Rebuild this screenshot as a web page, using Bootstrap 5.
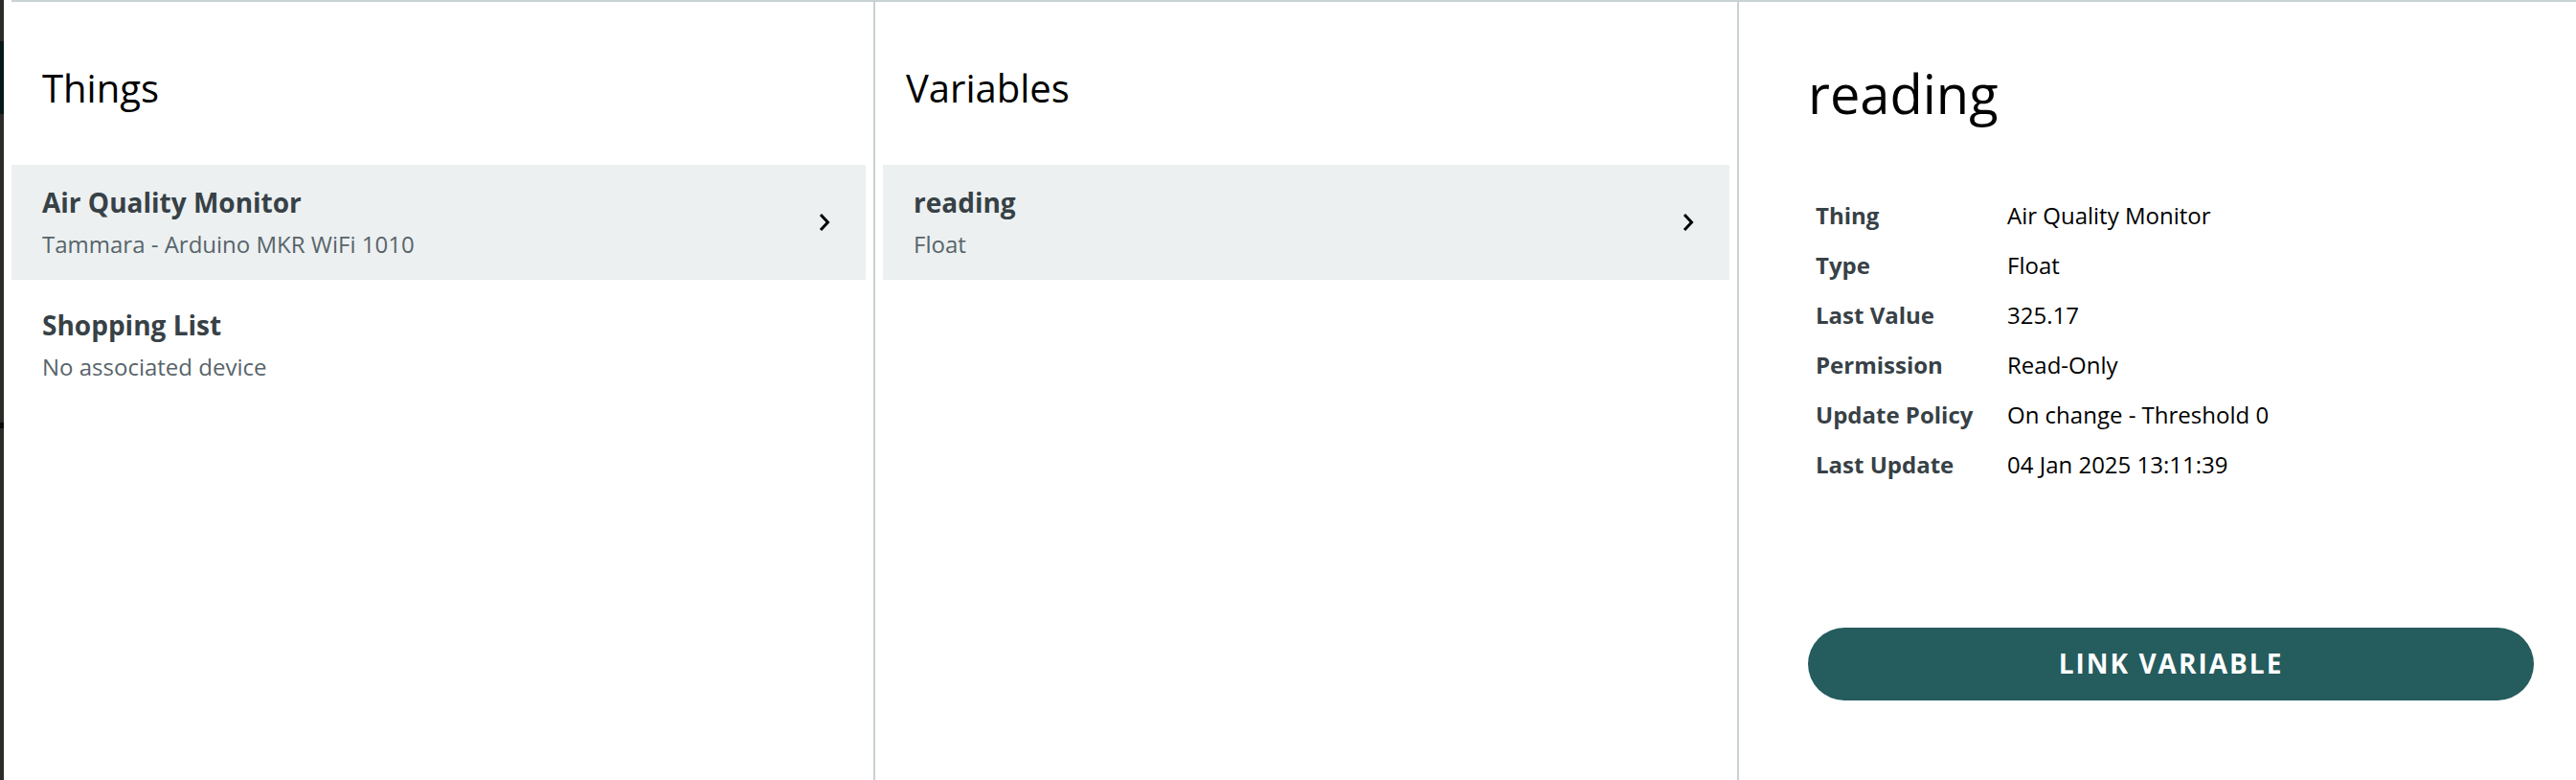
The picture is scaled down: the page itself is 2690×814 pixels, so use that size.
<!DOCTYPE html>
<html lang="en">
<head>
<meta charset="utf-8">
<meta name="viewport" content="width=device-width, initial-scale=1">
<title>Link variable</title>
<link href="https://cdn.jsdelivr.net/npm/bootstrap@5.3.0/dist/css/bootstrap.min.css" rel="stylesheet">
<style>
  body { font-family: "Open Sans", sans-serif; font-size: 24px; line-height: 44px; color: #000; background: #fff; }
  .backdrop-edge {
    width: 4px;
    background:
      linear-gradient(#061918, #061918) 0 43px / 4px 76px no-repeat,
      linear-gradient(#0c0b08, #0c0b08) 0 441px / 4px 6px no-repeat,
      #2d2b28;
  }
  .browser {
    grid-template-columns: minmax(0, 902fr) minmax(0, 902fr) minmax(0, 874fr);
    border-top: 2px solid #c9d2d2;
    margin-left: 8px;
  }
  .pane { border-right: 2px solid #c9d2d2; }
  .detail { padding: 57px 44px 0 72px; }
  .pane-title { font-size: 40px; line-height: 56px; font-weight: 400; padding: 62px 32px 52px; margin: 0; }
  .entries { gap: 8px; padding-right: 8px; }
  .pane + .pane .entries { padding-left: 8px; }
  .entry { border: 0; background: transparent; padding: 16px 32px; color: #374146; }
  .entry.active { background: #ecf0f1; }
  .entry-name { font-size: 28px; line-height: 46px; font-weight: 700; }
  .entry-note { line-height: 42px; color: #58646a; }
  .detail-title { font-size: 56px; line-height: 76px; font-weight: 400; margin: 0 0 64px; }
  .facts { line-height: 52px; margin-bottom: 144px; }
  .facts th, .facts td { padding: 0 0 0 8px; }
  .facts th { width: 200px; color: #374146; }
  .btn-link-variable { --bs-btn-color: #fff; --bs-btn-bg: #255c5e; --bs-btn-hover-color: #fff; --bs-btn-hover-bg: #1b4748;
    font-size: 28px; line-height: 42px; font-weight: 700; padding: 16px 16px 18px; border: 0; letter-spacing: 2px; }
</style>
</head>
<body>
<div class="d-flex min-vh-100">
  <div class="backdrop-edge flex-shrink-0"></div>
  <main class="browser d-grid flex-grow-1">
    <section class="pane">
      <h2 class="pane-title">Things</h2>
      <div class="entries d-flex flex-column">
        <button type="button" class="entry active d-flex align-items-center justify-content-between text-start">
          <span><span class="entry-name d-block">Air Quality Monitor</span><span class="entry-note d-block">Tammara - Arduino MKR WiFi 1010</span></span>
          <svg width="20" height="20" viewBox="0 0 20 20" fill="none" stroke="#000" stroke-width="3" aria-hidden="true"><path d="M5 2l7.5 8L5 18"/></svg>
        </button>
        <button type="button" class="entry text-start">
          <span class="entry-name d-block">Shopping List</span><span class="entry-note d-block">No associated device</span>
        </button>
      </div>
    </section>
    <section class="pane">
      <h2 class="pane-title">Variables</h2>
      <div class="entries d-flex flex-column">
        <button type="button" class="entry active d-flex align-items-center justify-content-between text-start">
          <span><span class="entry-name d-block">reading</span><span class="entry-note d-block">Float</span></span>
          <svg width="20" height="20" viewBox="0 0 20 20" fill="none" stroke="#000" stroke-width="3" aria-hidden="true"><path d="M5 2l7.5 8L5 18"/></svg>
        </button>
      </div>
    </section>
    <section class="detail">
      <h1 class="detail-title">reading</h1>
      <table class="facts w-100">
        <tbody>
          <tr><th scope="row">Thing</th><td>Air Quality Monitor</td></tr>
          <tr><th scope="row">Type</th><td>Float</td></tr>
          <tr><th scope="row">Last Value</th><td>325.17</td></tr>
          <tr><th scope="row">Permission</th><td>Read-Only</td></tr>
          <tr><th scope="row">Update Policy</th><td>On change - Threshold 0</td></tr>
          <tr><th scope="row">Last Update</th><td>04 Jan 2025 13:11:39</td></tr>
        </tbody>
      </table>
      <button type="button" class="btn btn-link-variable rounded-pill w-100">LINK VARIABLE</button>
    </section>
  </main>
</div>
<script src="https://cdn.jsdelivr.net/npm/bootstrap@5.3.0/dist/js/bootstrap.bundle.min.js"></script>
</body>
</html>
